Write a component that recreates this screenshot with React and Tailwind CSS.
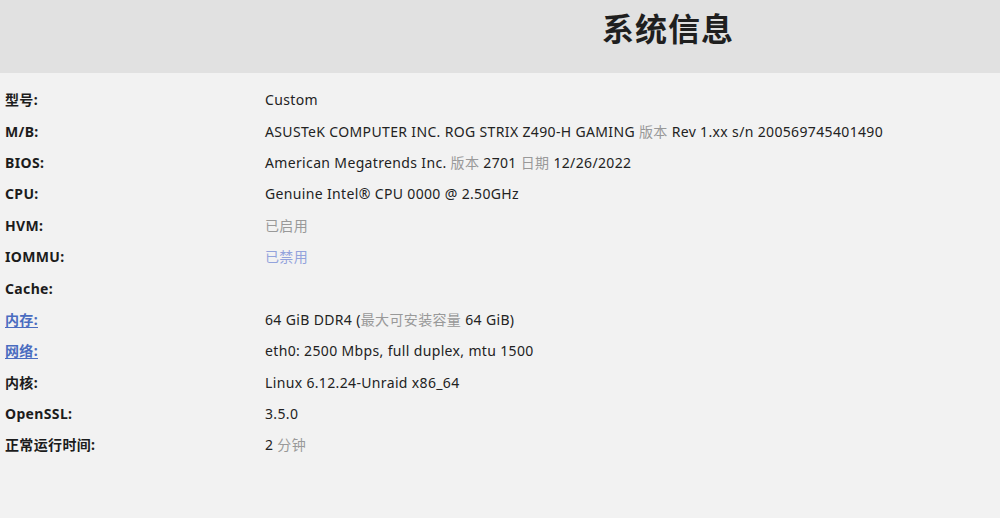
import React from "react";

const gray = "text-[#999999]";

const rows = [
  { label: "型号:", value: <span>Custom</span> },
  {
    label: "M/B:",
    value: (
      <span>
        ASUSTeK COMPUTER INC. ROG STRIX Z490-H GAMING <span className={gray}>版本</span> Rev 1.xx s/n 200569745401490
      </span>
    ),
  },
  {
    label: "BIOS:",
    value: (
      <span>
        American Megatrends Inc. <span className={gray}>版本</span> 2701 <span className={gray}>日期</span> 12/26/2022
      </span>
    ),
  },
  { label: "CPU:", value: <span>Genuine Intel® CPU 0000 @ 2.50GHz</span> },
  { label: "HVM:", value: <span className={gray}>已启用</span> },
  { label: "IOMMU:", value: <span className="text-[#93a3dc]">已禁用</span> },
  { label: "Cache:", value: null },
  {
    label: "内存:",
    link: true,
    value: (
      <span>
        64 GiB DDR4 (<span className={gray}>最大可安装容量</span> 64 GiB)
      </span>
    ),
  },
  { label: "网络:", link: true, value: <span>eth0: 2500 Mbps, full duplex, mtu 1500</span> },
  { label: "内核:", value: <span>Linux 6.12.24-Unraid x86_64</span> },
  { label: "OpenSSL:", value: <span>3.5.0</span> },
  {
    label: "正常运行时间:",
    value: (
      <span>
        2 <span className={gray}>分钟</span>
      </span>
    ),
  },
];

export default function App() {
  return (
    <div
      className="w-[1000px] h-[518px] bg-[#f2f2f2] text-[#222222] overflow-hidden"
      style={{ fontFamily: '"Noto Sans", "Noto Sans CJK SC", sans-serif' }}
    >
      {/* HEADER */}
      <div className="h-[73px] bg-[#e1e1e1] flex items-center pl-[602px]">
        <h1 className="text-[32px] font-bold text-[#1f1f1f] tracking-[1px] leading-none -mt-[16px]">
          系统信息
        </h1>
      </div>

      {/* INFO TABLE */}
      <div className="pt-[11px] pl-[5px]">
        {rows.map((r) => (
          <div key={r.label} className="flex h-[31.4px] items-center text-[14px] tracking-[0.35px]">
            <div className="w-[260px] font-bold text-[#1c1c1c]">
              {r.link ? (
                <a href="#" className="text-[#4a6cc0] underline underline-offset-2">
                  {r.label}
                </a>
              ) : (
                r.label
              )}
            </div>
            <div>{r.value}</div>
          </div>
        ))}
      </div>
    </div>
  );
}
